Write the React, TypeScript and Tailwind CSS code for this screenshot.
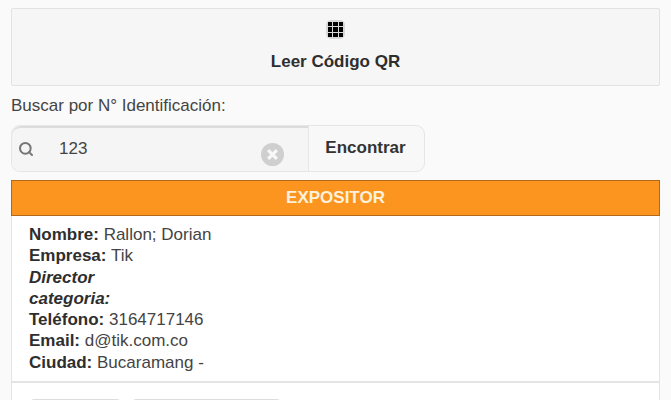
import React from "react";
import { Search } from "lucide-react";

function Row({ label, value }: { label: string; value: string }) {
  return (
    <div>
      <b className="font-bold text-[#2e2e2e]">{label}</b> {value}
    </div>
  );
}

export default function App() {
  return (
    <div className="h-[400px] w-[671px] overflow-hidden bg-[#fafafa] pl-[11px] pr-[11px] pt-[8px] font-['Liberation_Sans',Arial,sans-serif] text-[#333]">
      <div className="flex h-[78px] flex-col items-center rounded-[2px] border border-[#e2e2e2] bg-[#f6f6f6] pt-[11px]">
        <div className="grid h-[19px] w-[19px] grid-cols-3 gap-[1px] rounded-[5px] bg-[#d8d8d8] p-[2px]">
          {Array.from({ length: 9 }).map((_, i) => (
            <span key={i} className="bg-black" />
          ))}
        </div>
        <div className="mt-[13px] text-[17px] font-bold leading-[20px] text-[#2e2e2e]">Leer Código QR</div>
      </div>

      <div className="mt-[10px] text-[17px] leading-[20px] text-[#444]">Buscar por N° Identificación:</div>

      <div className="mt-[9px] flex h-[47px] w-[414px] rounded-[9px] border border-[#e6e6e6] bg-[#f8f8f8]">
        <div className="relative flex w-[296px] items-center rounded-l-[9px] border-t-2 border-[#dcdcdc] bg-[#f5f5f5] pb-[1px]">
          <Search className="ml-[6px] h-[16px] w-[16px] text-[#777]" strokeWidth={3} />
          <span className="ml-[25px] text-[17px] text-[#444]">123</span>
          <span className="absolute left-[249px] top-[15px] flex h-[23px] w-[23px] items-center justify-center rounded-full bg-[#cfcfcf]">
            <svg viewBox="0 0 12 12" className="h-[13px] w-[13px]">
              <path d="M2 2 10 10M10 2 2 10" stroke="#f8f8f8" strokeWidth="3" />
            </svg>
          </span>
        </div>
        <div className="flex flex-1 items-center justify-center border-l border-[#e6e6e6] pb-[2px] pr-[2px] text-[17px] font-bold text-[#333]">
          Encontrar
        </div>
      </div>

      <div className="mt-[8px] flex h-[36px] items-center justify-center border border-[#b06a1a] bg-[#fb951f] text-[17px] font-bold text-[#fdf1dc]">
        EXPOSITOR
      </div>

      <div className="border-x border-b-2 border-[#e4e4e4] bg-white pb-[8px] pl-[17px] pt-[8px] text-[17px] leading-[21.3px] text-[#444]">
        <Row label="Nombre:" value="Rallon; Dorian" />
        <Row label="Empresa:" value="Tik" />
        <div className="font-bold italic text-[#2e2e2e]">Director</div>
        <div className="font-bold italic text-[#2e2e2e]">categoria:</div>
        <Row label="Teléfono:" value="3164717146" />
        <Row label="Email:" value="d@tik.com.co" />
        <Row label="Ciudad:" value="Bucaramang -" />
      </div>

      <div className="flex h-[30px] gap-[9px] border-x border-[#e4e4e4] bg-white pl-[17px] pt-[16px]">
        <div className="h-[20px] w-[93px] rounded-t-[5px] border border-[#ddd] bg-[#f6f6f6]" />
        <div className="h-[20px] w-[151px] rounded-t-[5px] border border-[#ddd] bg-[#f6f6f6]" />
      </div>
    </div>
  );
}
